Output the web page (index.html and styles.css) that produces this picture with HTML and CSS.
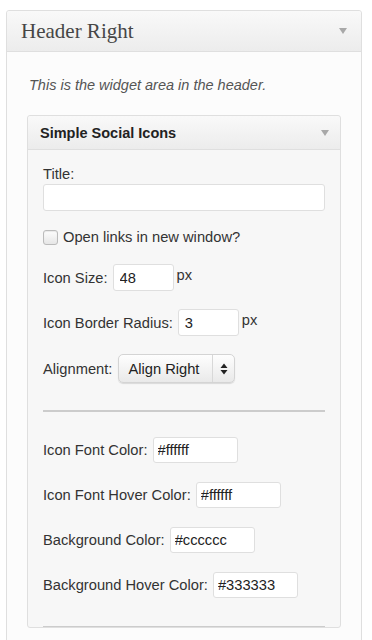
FILE: index.html
```html
<!DOCTYPE html>
<html>
<head>
<meta charset="utf-8">
<link rel="stylesheet" href="styles.css">
</head>
<body>
<div class="sidebar">
  <div class="sidebar-head">
    <h3 class="sidebar-title">Header Right</h3>
    <span class="toggle"></span>
  </div>
  <div class="sidebar-body">
    <p class="desc">This is the widget area in the header.</p>
    <div class="widget">
      <div class="widget-head">
        <h4 class="widget-title">Simple Social Icons</h4>
        <span class="toggle"></span>
      </div>
      <div class="widget-body">
        <label class="label-block">Title:</label>
        <input class="text wide" type="text" value="">
        <div class="row row-check">
          <span class="checkbox"></span>
          <span>Open links in new window?</span>
        </div>
        <div class="row row-num">
          <span>Icon Size:</span>
          <input class="text num" type="text" value="48">
          <span class="unit">px</span>
        </div>
        <div class="row row-num">
          <span>Icon Border Radius:</span>
          <input class="text num" type="text" value="3">
          <span class="unit">px</span>
        </div>
        <div class="row row-select">
          <span>Alignment:</span>
          <div class="select">
            <span class="select-value">Align Right</span>
            <span class="select-arrows">
              <svg width="8" height="12" viewBox="0 0 8 12"><path d="M4 0.5 L7.5 5 L0.5 5 Z M4 11.5 L7.5 7 L0.5 7 Z" fill="#222"/></svg>
            </span>
          </div>
        </div>
        <hr class="sep sep-thick">
        <div class="row row-color first">
          <span>Icon Font Color:</span>
          <input class="text color" type="text" value="#ffffff">
        </div>
        <div class="row row-color">
          <span>Icon Font Hover Color:</span>
          <input class="text color" type="text" value="#ffffff">
        </div>
        <div class="row row-color">
          <span>Background Color:</span>
          <input class="text color" type="text" value="#cccccc">
        </div>
        <div class="row row-color">
          <span>Background Hover Color:</span>
          <input class="text color" type="text" value="#333333">
        </div>
        <hr class="sep sep-thin">
      </div>
    </div>
  </div>
</div>
</body>
</html>
```

FILE: styles.css
```css
* { box-sizing: border-box; }
html, body { margin: 0; padding: 0; background: #fff; }
body {
  font-family: "Liberation Sans", Arial, sans-serif;
  font-size: 14.7px;
  color: #333;
  height: 640px;
  overflow: hidden;
}
.sidebar {
  margin: 10px 10px 0 6px;
  width: 356px;
  border: 1px solid #dfdfdf;
  border-radius: 3px;
  background: #fcfcfc;
  min-height: 700px;
}
.sidebar-head {
  height: 41px;
  border-bottom: 1px solid #dfdfdf;
  background: linear-gradient(#f9f9f9, #ececec);
  display: flex;
  align-items: center;
  justify-content: space-between;
  padding: 0 14px 0 14px;
  border-radius: 3px 3px 0 0;
}
.sidebar-title {
  margin: 0;
  font-family: "Liberation Serif", Georgia, serif;
  font-weight: normal;
  font-size: 21px;
  color: #464646;
}
.toggle {
  width: 0; height: 0;
  border-left: 4px solid transparent;
  border-right: 4px solid transparent;
  border-top: 6px solid #a8a8a8;
}
.sidebar-body { padding: 25px 20px 0 20px; }
.desc {
  margin: 0 0 22px 2px;
  font-style: italic;
  font-size: 14.5px;
  line-height: 16px;
  color: #555;
}
.widget {
  border: 1px solid #dfdfdf;
  border-radius: 3px;
  background: #f7f7f7;
}
.widget-head {
  height: 34px;
  border-bottom: 1px solid #dfdfdf;
  background: linear-gradient(#f9f9f9, #ececec);
  display: flex;
  align-items: center;
  justify-content: space-between;
  padding: 0 11px 0 12px;
  border-radius: 3px 3px 0 0;
}
.widget-title {
  margin: 0;
  font-size: 14.5px;
  font-weight: bold;
  color: #222;
}
.widget-body {
  padding: 16px 15px 0 15px;
  display: flex;
  flex-direction: column;
}
.label-block { display: block; line-height: 16px; height: 16px; }
.text {
  font-family: "Liberation Sans", Arial, sans-serif;
  font-size: 14.7px;
  color: #222;
  border: 1px solid #dfdfdf;
  border-radius: 3px;
  background: #fff;
  padding: 0 5px;
  outline: none;
}
.wide { width: 100%; height: 27px; margin-top: 2px; }
.row { display: flex; align-items: center; }
.row-check { height: 20px; margin-top: 16px; }
.checkbox {
  width: 15px; height: 15px;
  border: 1px solid #bbb;
  border-radius: 3px;
  background: linear-gradient(#fdfdfd, #e6e6e6);
  margin-right: 5px;
  box-shadow: inset 0 1px 1px rgba(0,0,0,0.08);
}
.row-num { height: 27px; margin-top: 17px; }
.row-num + .row-num { margin-top: 18px; }
.num { width: 61px; height: 27px; margin-left: 5px; padding-left: 6px; }
.unit { margin-left: 3px; margin-top: -5px; }
.row-select { height: 29px; margin-top: 18px; }
.select {
  margin-left: 6px;
  width: 117px;
  height: 29px;
  border: 1px solid #d4d4d4;
  border-radius: 5px;
  background: linear-gradient(#fefefe, #e9e9e9);
  box-shadow: 0 1px 1px rgba(0,0,0,0.12);
  display: flex;
  align-items: center;
}
.select-value { flex: 1; padding-left: 9px; color: #222; }
.select-arrows {
  width: 22px;
  height: 100%;
  border-left: 1px solid #d8d8d8;
  display: flex;
  align-items: center;
  justify-content: center;
}
.sep { border: 0; margin: 0; width: 100%; }
.sep-thick { height: 2px; background: #ccc; margin-top: 27px; }
.sep-thin { height: 1px; background: #ccc; margin-top: 28px; }
.row-color { height: 26px; margin-top: 19px; }
.row-color.first { margin-top: 25px; }
.color { width: 85px; height: 26px; margin-left: 5px; padding-left: 4px; }
```
